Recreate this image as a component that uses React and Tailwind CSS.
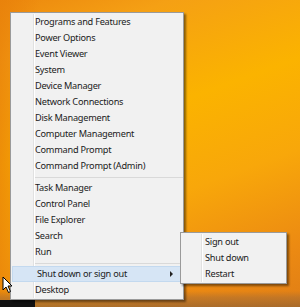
import React from 'react';

const groups = [
  ['Programs and Features', 'Power Options', 'Event Viewer', 'System', 'Device Manager', 'Network Connections', 'Disk Management', 'Computer Management', 'Command Prompt', 'Command Prompt (Admin)'],
  ['Task Manager', 'Control Panel', 'File Explorer', 'Search', 'Run'],
];

function Item({ label, active, arrow }) {
  return (
    <div
      className={
        'relative flex h-4 items-center pl-[24px] ' +
        (active ? 'mx-[1px] border border-[#c3d9ef] bg-[#d6e5f5] pl-[23px]' : '')
      }
    >
      <span className="whitespace-nowrap leading-none">{label}</span>
      {arrow && (
        <span className="absolute right-[8px] top-1/2 h-0 w-0 -translate-y-1/2 border-y-[3px] border-l-[3px] border-y-transparent border-l-[#222]" />
      )}
    </div>
  );
}

function Separator() {
  return (
    <div className="flex h-[6px] items-center pl-[23px]">
      <div className="h-px w-full bg-[#d9d9d9]" />
    </div>
  );
}

export default function App() {
  return (
    <div
      className="relative flex h-[307px] w-[300px] flex-col overflow-hidden bg-[linear-gradient(160deg,#ec880e_0%,#f5a014_15%,#fbb300_40%,#f8a70a_62%,#ec8a12_85%,#e07e16_100%)] text-[9.2px] tracking-[-0.25px] text-[#1b1b1b]"
      style={{ fontFamily: '"Noto Sans", "Open Sans", sans-serif' }}
    >
      {/* left darker band */}
      <div className="absolute inset-y-0 left-0 w-[40px] bg-[linear-gradient(90deg,rgba(232,128,10,0.7),rgba(232,128,10,0))]" />

      {/* desktop area */}
      <div className="flex-1" />

      {/* taskbar */}
      <div className="relative flex h-[16px] flex-col bg-[linear-gradient(180deg,rgba(160,110,60,0)_0%,rgba(170,110,50,0.55)_40%,rgba(150,100,50,0.75)_100%)]">
        <div className="flex-1" />
        <div className="flex h-[7px]">
          <div className="w-[35px] bg-[#111]" />
          <div className="flex-1" />
        </div>
      </div>

      {/* main menu */}
      <div className="absolute left-[10px] top-[12px] w-[174px] border border-[#9a9a9a] bg-[#f1f1f1] py-px shadow-[2px_2px_2px_rgba(0,0,0,0.45)]">
        <div className="absolute inset-y-px left-[22px] w-px bg-[#e1e1e1]" />
        <div className="absolute inset-y-px left-[23px] w-px bg-white" />
        {groups[0].map((l) => (
          <Item key={l} label={l} />
        ))}
        <Separator />
        {groups[1].map((l) => (
          <Item key={l} label={l} />
        ))}
        <Separator />
        <Item label="Shut down or sign out" active arrow />
        <Item label="Desktop" />
      </div>

      {/* submenu */}
      <div className="absolute left-[180px] top-[232px] w-[107px] border border-[#9a9a9a] bg-[#f1f1f1] py-px shadow-[2px_2px_2px_rgba(0,0,0,0.45)]">
        <div className="absolute inset-y-px left-[20px] w-px bg-[#e1e1e1]" />
        <div className="absolute inset-y-px left-[21px] w-px bg-white" />
        {['Sign out', 'Shut down', 'Restart'].map((l) => (
          <div key={l} className="relative flex h-4 items-center pl-[24px]">
            <span className="whitespace-nowrap leading-none">{l}</span>
          </div>
        ))}
      </div>

      {/* mouse cursor */}
      <svg className="absolute left-[2px] top-[276px]" width="12" height="18" viewBox="0 0 12 18">
        <path d="M1 1 L1 14 L4 11 L6.5 16.5 L8.5 15.5 L6 10 L10 10 Z" fill="#fff" stroke="#000" strokeWidth="1" />
      </svg>
    </div>
  );
}
